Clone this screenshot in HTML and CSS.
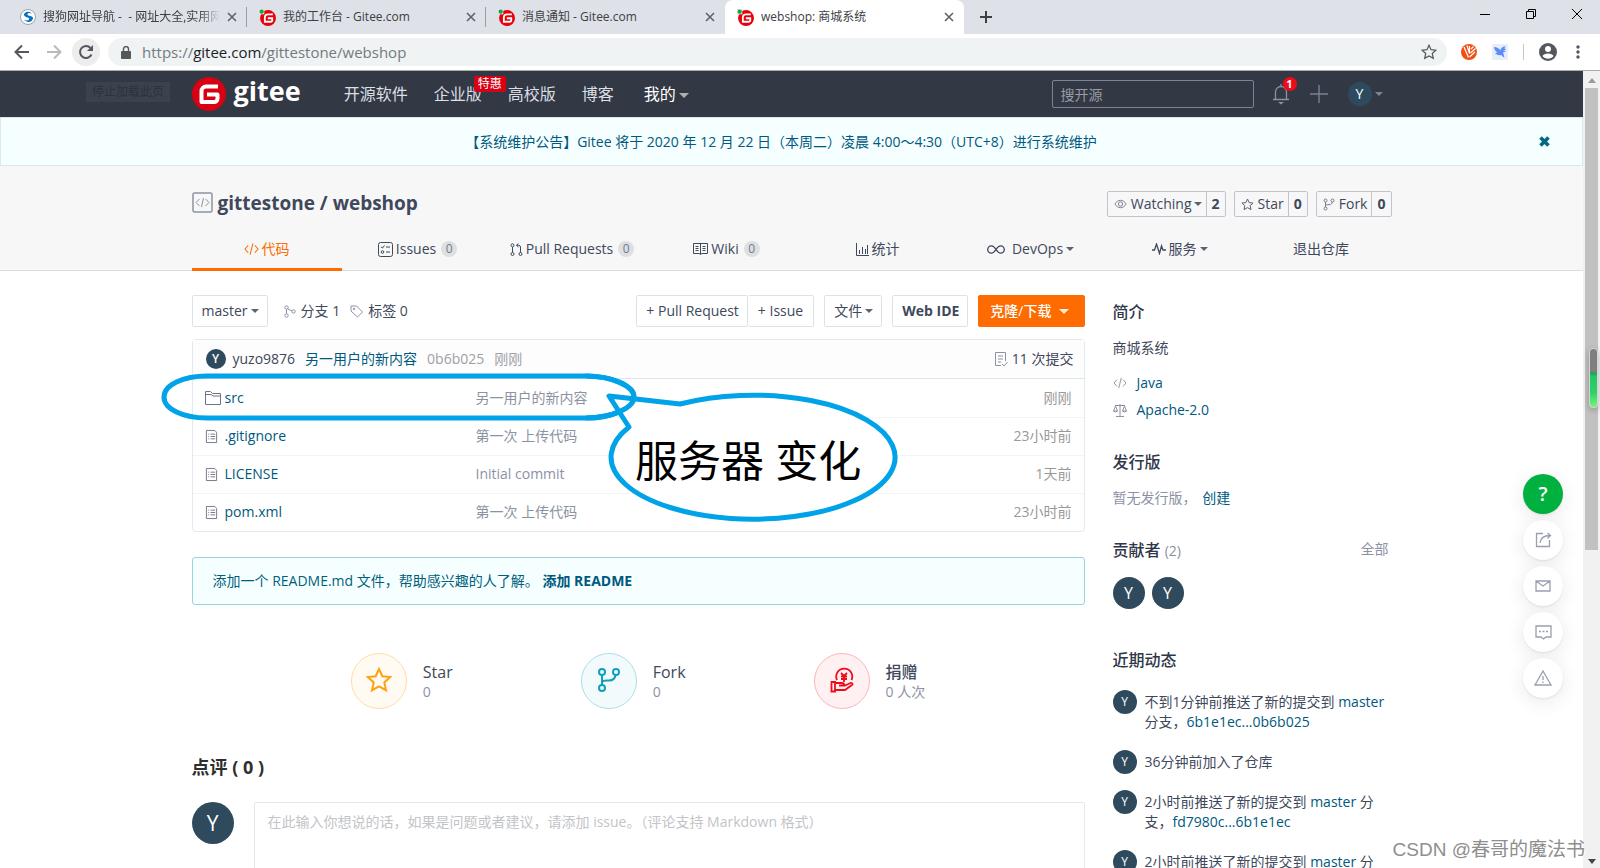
FILE: index.html
```html
<!DOCTYPE html>
<html lang="zh-CN">
<head>
<meta charset="utf-8">
<title>webshop: 商城系统</title>
<link rel="stylesheet" href="styles.css">
</head>
<body>
<svg class="defs" width="0" height="0" aria-hidden="true">
  <symbol id="favicon" viewBox="0 0 16 16"><circle cx="8.500" cy="8.500" r="7.500" fill="#e8000b"/><path d="M0 0h5v5H0z" fill="#dee1e6"/><circle cx="2.500" cy="2.500" r="2" fill="#0cae3c"/><path d="M13 5H8.500a3 3 0 0 0-3 3v4H11a1.500 1.500 0 0 0 1.500-1.500V8.700H8.300" fill="none" stroke="#fff" stroke-width="1.700"/></symbol>
  <symbol id="x" viewBox="0 0 10 10"><path d="M1 1l8 8M9 1L1 9" stroke="currentColor" stroke-width="1.600" fill="none"/></symbol>
  <symbol id="code" viewBox="0 0 16 14"><path d="M4.500 3L1 7l3.500 4M11.500 3L15 7l-3.500 4M9.500 1l-3 12" stroke="currentColor" stroke-width="1.100" fill="none"/></symbol>
  <symbol id="file" viewBox="0 0 14 16"><path d="M1.500 1.500h9l2 2v11h-11zM3.500 5.500h1M6 5.500h5M3.500 8h1M6 8h5M3.500 10.500h1M6 10.500h5" stroke="currentColor" fill="none"/></symbol>
  <symbol id="fork" viewBox="0 0 24 26"><g stroke="currentColor" fill="none" stroke-width="2"><circle cx="5" cy="5" r="3"/><circle cx="19" cy="5" r="3"/><circle cx="5" cy="21" r="3"/><path d="M5 8v10M5 15c1-2 4-1.500 7-1.500 4 0 6-2 6.500-5.500"/></g></symbol>
  <symbol id="star" viewBox="0 0 26 26"><path d="M13 2l3.300 7.200 7.900.900-5.900 5.300 1.700 7.800-7-3.900-7 3.900 1.700-7.800L1.800 10.100l7.900-.900z" fill="none" stroke="currentColor" stroke-width="2"/></symbol>
</svg>

<header class="browser">
  <div class="tabstrip">
    <div class="tab">
      <svg width="16" height="16" viewBox="0 0 16 16"><circle cx="8" cy="8" r="7.500" fill="#fff" stroke="#9aa3ab"/><path d="M12 4.500A5.200 5.200 0 0 0 4 5c-.5 4 6.500 2.500 5 5.500-1 1.500-3.500 1-5 0 2 3.500 8 3.500 9-1C13.500 6 7 7.500 7.500 5.200c.8-1.700 3-1.200 4.500-.7z" fill="#0b72bd"/></svg>
      <span class="tab-title fade">搜狗网址导航 -&nbsp; - 网址大全,实用网址</span>
      <button class="tab-close" aria-label="关闭"><svg width="10" height="10"><use href="#x"/></svg></button>
    </div>
    <div class="tab">
      <svg width="17" height="17"><use href="#favicon"/></svg>
      <span class="tab-title">我的工作台 - Gitee.com</span>
      <button class="tab-close" aria-label="关闭"><svg width="10" height="10"><use href="#x"/></svg></button>
    </div>
    <div class="tab last">
      <svg width="17" height="17"><use href="#favicon"/></svg>
      <span class="tab-title">消息通知 - Gitee.com</span>
      <button class="tab-close" aria-label="关闭"><svg width="10" height="10"><use href="#x"/></svg></button>
    </div>
    <div class="tab active">
      <svg width="17" height="17"><use href="#favicon"/></svg>
      <span class="tab-title">webshop: 商城系统</span>
      <button class="tab-close" aria-label="关闭"><svg width="10" height="10"><use href="#x"/></svg></button>
    </div>
    <button class="new-tab" aria-label="新标签页"><svg width="12" height="12" viewBox="0 0 12 12"><path d="M6 0v12M0 6h12" stroke="#3c4043" stroke-width="2"/></svg></button>
    <div class="window-controls">
      <button aria-label="最小化"><svg width="12" height="12" viewBox="0 0 12 12"><path d="M1 6.500h10" stroke="#000"/></svg></button>
      <button aria-label="还原"><svg width="12" height="12" viewBox="0 0 12 12"><path d="M1.500 3.500h7v7h-7zM3.500 3.500v-2h7v7h-2" stroke="#000" fill="none"/></svg></button>
      <button aria-label="关闭窗口"><svg width="12" height="12" viewBox="0 0 12 12"><path d="M1 1l10 10M11 1L1 11" stroke="#000"/></svg></button>
    </div>
  </div>
  <div class="toolbar">
    <button class="round" aria-label="后退"><svg width="16" height="16" viewBox="0 0 16 16"><path d="M15 8H2M8 1.500L1.500 8 8 14.500" stroke="#54585c" stroke-width="2" fill="none"/></svg></button>
    <button class="round" aria-label="前进"><svg width="16" height="16" viewBox="0 0 16 16"><path d="M1 8h13M8 1.500L14.500 8 8 14.500" stroke="#b8babd" stroke-width="2" fill="none"/></svg></button>
    <button class="round reload" aria-label="重新加载"><svg width="16" height="16" viewBox="0 0 16 16"><path d="M13.500 10.500A6 6 0 1 1 12.500 4" stroke="#54585c" stroke-width="2" fill="none"/><path d="M15 1v6H9z" fill="#54585c"/></svg></button>
    <div class="omnibox">
      <svg width="10" height="13" viewBox="0 0 10 13"><path d="M1 5h8a1 1 0 0 1 1 1v6a1 1 0 0 1-1 1H1a1 1 0 0 1-1-1V6a1 1 0 0 1 1-1z" fill="#54585c"/><path d="M2.500 5V3a2.500 2.500 0 0 1 5 0v2" stroke="#54585c" stroke-width="1.400" fill="none"/></svg>
      <span class="url">https://<b>gitee.com</b>/gittestone/webshop</span>
      <svg width="16" height="16" viewBox="0 0 26 26" color="#54585c"><use href="#star"/></svg>
    </div>
    <div class="extensions">
      <svg width="16" height="16" viewBox="0 0 16 16"><circle cx="8" cy="8" r="8" fill="#f04f14"/><path d="M3 3l4.500 10.500M6 1.500l2.500 8V2M8.500 13l5.500-5M9.500 9l5-4.500M10 5l2.500-2.500" stroke="#fff" stroke-width="1.200" fill="none"/></svg>
      <svg width="16" height="16" viewBox="0 0 16 16"><rect width="16" height="16" rx="1" fill="#e8edfb"/><path d="M2 3c3 0 5 1.500 6.500 3C9.500 3 11.500 2 14 2.500L12.500 4l1.500 2-3 .500 3 1-3 1 1.500 5C10.500 13 10 11.500 9 11c-2.500.500-5-.500-6-2l2.500-.500C3.500 7.500 2.300 5.500 2 3z" fill="#5a8df5"/></svg>
      <i class="divider"></i>
      <svg width="18" height="18" viewBox="0 0 18 18"><circle cx="9" cy="9" r="9" fill="#54585c"/><circle cx="9" cy="6" r="3" fill="#fff"/><path d="M3.500 13c1-3.500 10-3.500 11 0-2.500 3.500-8.500 3.500-11 0z" fill="#fff"/></svg>
      <svg class="menu" width="4" height="14" viewBox="0 0 4 14" fill="#54585c"><circle cx="2" cy="2" r="1.700"/><circle cx="2" cy="7" r="1.700"/><circle cx="2" cy="12" r="1.700"/></svg>
    </div>
  </div>
</header>

<div class="viewport">
<div class="page">
  <nav class="site-nav">
    <span class="ghost">停止加载此页</span>
    <div class="container nav-inner">
      <a class="logo" href="#"><svg width="34" height="34" viewBox="0 0 34 34"><circle cx="17" cy="17" r="17" fill="#d90013"/><path d="M26 9.500H14a4.500 4.500 0 0 0-4.500 4.500v11H22a3.500 3.500 0 0 0 3.500-3.500v-4H15" fill="none" stroke="#fff" stroke-width="4" stroke-linejoin="round"/></svg><span>gitee</span></a>
      <a class="nav-link" href="#">开源软件</a>
      <a class="nav-link" href="#">企业版<em class="promo">特惠</em></a>
      <a class="nav-link" href="#">高校版</a>
      <a class="nav-link" href="#">博客</a>
      <a class="nav-link mine" href="#">我的<i class="caret"></i></a>
      <input class="search" type="text" placeholder="搜开源" aria-label="搜开源">
      <button class="bell" aria-label="通知"><svg width="18" height="22" viewBox="0 0 18 22"><path d="M1 16.500h16M3.500 16V9a5.500 5.500 0 0 1 11 0v7M9 3.500V1" stroke="#8c92a4" stroke-width="1.300" fill="none"/><path d="M6 19h6l-3 2.500z" fill="#8c92a4"/></svg><em>1</em></button>
      <button class="plus" aria-label="新建"><svg width="18" height="18" viewBox="0 0 18 18"><path d="M9 0v18M0 9h18" stroke="#7c8295" stroke-width="1.400"/></svg></button>
      <button class="user"><span class="avatar a24 head">Y</span><i class="caret"></i></button>
    </div>
  </nav>

  <div class="notice">
    <a href="#">【系统维护公告】Gitee 将于 2020 年 12 月 22 日（本周二）凌晨 4:00～4:30（UTC+8）进行系统维护</a>
    <button class="notice-close" aria-label="关闭公告"><svg width="11" height="11" viewBox="0 0 11 11"><path d="M1.500 1.500l8 8M9.500 1.500l-8 8" stroke="#006a85" stroke-width="3.600"/></svg></button>
  </div>

  <div class="repo-head">
    <div class="container">
      <div class="repo-title">
        <svg width="21" height="21" viewBox="0 0 21 21" fill="none" stroke="#8c92a4"><rect x="1" y="1" width="19" height="19" rx="1.500" stroke-width="1.500"/><path d="M7.500 7L4 10.500 7.500 14M13.500 7l3.500 3.500-3.500 3.500M11.500 6l-2 9"/></svg>
        <h1><a href="#">gittestone</a> / <a href="#">webshop</a></h1>
        <div class="counter"><button><svg width="13" height="10" viewBox="0 0 14 10" fill="none" stroke="#777d90"><path d="M1 5c3-5.300 9-5.300 12 0-3 5.300-9 5.300-12 0z"/><circle cx="7" cy="5" r="2.300"/></svg>Watching<i class="caret"></i></button><a href="#">2</a></div>
        <div class="counter"><button><svg width="13" height="13" color="#5c6277"><use href="#star"/></svg>Star</button><a href="#">0</a></div>
        <div class="counter"><button><svg width="12" height="13" color="#777d90"><use href="#fork"/></svg>Fork</button><a href="#">0</a></div>
      </div>
      <nav class="repo-tabs">
        <a class="on" href="#"><svg width="15" height="14"><use href="#code"/></svg>代码</a>
        <a href="#"><svg width="15" height="15" viewBox="0 0 15 15" fill="none" stroke="currentColor"><rect x=".5" y=".5" width="14" height="14" rx="2"/><path d="M3 5l1.500 1L6.500 3.500M8 5h4M8 10h4"/><circle cx="4.500" cy="10" r="1.300"/></svg>Issues<em>0</em></a>
        <a href="#"><svg width="13" height="13" viewBox="0 0 13 13" fill="none" stroke="currentColor"><circle cx="2.500" cy="2.300" r="1.500"/><circle cx="2.500" cy="11" r="1.500"/><circle cx="10.500" cy="11" r="1.500"/><path d="M2.500 4v5.500M10.500 9.500V4q0-1.700-2-1.700H6.500M8.500.5L6.500 2.300l2 1.800"/></svg>Pull Requests<em>0</em></a>
        <a href="#"><svg width="15" height="12" viewBox="0 0 15 12" fill="none" stroke="currentColor"><path d="M.5.5h14v10H9l-1.500 1L6 10.500H.5zM7.500 1v10M2.500 3.500h3M2.500 5.500h3M2.500 7.500h3M9.500 3.500h3M9.500 5.500h3M9.500 7.500h3"/></svg>Wiki<em>0</em></a>
        <a href="#"><svg width="13" height="13" viewBox="0 0 13 13" fill="none" stroke="currentColor"><path d="M.5 0v12.500H13M3.500 11V7M6.500 11V4M9.500 11V6M11.500 11V2"/></svg>统计</a>
        <a href="#"><svg class="wide" width="18" height="9" viewBox="0 0 20 10" fill="none" stroke="currentColor" stroke-width="1.500"><path d="M10 5C7 .5 5.500 1 4.800 1a4 4 0 0 0 0 8C6.500 9 8 8 10 5s3.500-4 5.200-4a4 4 0 0 1 0 8C13.500 9 12 8 10 5z"/></svg>DevOps<i class="caret"></i></a>
        <a href="#"><svg width="14" height="12" viewBox="0 0 14 12" fill="none" stroke="currentColor" stroke-width="1.300"><path d="M0 7h2.500l2-6 3 9.500 2-7.500 1.500 4h3"/></svg>服务<i class="caret"></i></a>
        <a href="#">退出仓库</a>
      </nav>
    </div>
  </div>

  <div class="container columns">
    <main>
      <div class="actions">
        <button class="btn">master<i class="caret"></i></button>
        <a class="ref first" href="#"><svg width="12" height="13" viewBox="0 0 12 13" fill="none" stroke="#8c92a4"><circle cx="2.500" cy="2.500" r="1.700"/><circle cx="2.500" cy="10.500" r="1.700"/><circle cx="9.500" cy="6.500" r="1.700"/><path d="M2.500 4.200v4.600M4 4l4 2"/></svg>分支 1</a>
        <a class="ref" href="#"><svg width="13" height="13" viewBox="0 0 13 13" fill="none" stroke="#8c92a4"><path d="M1 1h5.500l6 6-5 5-6.500-6z"/><circle cx="4" cy="4" r=".8"/></svg>标签 0</a>
        <div class="group"><button class="btn">+ Pull Request</button><button class="btn issue">+ Issue</button></div>
        <button class="btn">文件<i class="caret"></i></button>
        <button class="btn strong">Web IDE</button>
        <button class="btn clone">克隆/下载<i class="caret"></i></button>
      </div>

      <section class="files">
        <div class="last-commit">
          <span class="avatar a20">Y</span>
          <a class="author" href="#">yuzo9876</a>
          <a class="message" href="#">另一用户的新内容</a>
          <span>0b6b025</span><span>刚刚</span>
          <a class="commits" href="#"><svg width="14" height="15" viewBox="0 0 14 15" fill="none" stroke="#8c92a4"><path d="M11.500 9V.5H1.500v13H7M4 4h5M4 7h5M4 10h3M8 12l2 2 3.500-4"/></svg>11 次提交</a>
        </div>
        <table>
          <tr><td><a href="#"><svg width="16" height="14" viewBox="0 0 16 14" fill="none" stroke="currentColor"><path d="M.5 13.500V.5h5l2 2h8v11zM.5 3.500h5.500l2 1.500h7"/></svg>src</a></td><td>另一用户的新内容</td><td>刚刚</td></tr>
          <tr><td><a href="#"><svg width="13" height="15"><use href="#file"/></svg>.gitignore</a></td><td>第一次 上传代码</td><td>23小时前</td></tr>
          <tr><td><a href="#"><svg width="13" height="15"><use href="#file"/></svg>LICENSE</a></td><td>Initial commit</td><td>1天前</td></tr>
          <tr><td><a href="#"><svg width="13" height="15"><use href="#file"/></svg>pom.xml</a></td><td>第一次 上传代码</td><td>23小时前</td></tr>
        </table>
        <svg class="markup" width="760" height="170" viewBox="0 0 760 170" fill="none" stroke="#00a2e8" stroke-width="5" stroke-linejoin="round">
          <path d="M55 10H434C460 10 482 20 482 31S460 52 434 52H55C31 52 12 43 12 31S31 10 55 10z"/>
          <path d="M457 30L528 38A142 62 0 1 1 477 61z" fill="#fff"/>
          <path d="M434 10C460 10 482 20 482 31S460 52 434 52"/>
          <text x="483" y="111">服务器 变化</text>
        </svg>
      </section>

      <div class="readme">添加一个 README.md 文件，帮助感兴趣的人了解。 <a href="#">添加 README</a></div>

      <div class="stats">
        <div class="stat"><button class="disc gold" aria-label="Star"><svg width="26" height="26"><use href="#star"/></svg></button><div><b>Star</b><span>0</span></div></div>
        <div class="stat"><button class="disc teal" aria-label="Fork"><svg width="24" height="26"><use href="#fork"/></svg></button><div><b>Fork</b><span>0</span></div></div>
        <div class="stat"><button class="disc red" aria-label="捐赠"><svg width="24" height="26" viewBox="0 0 24 26" fill="none" stroke="currentColor" stroke-width="1.800"><path d="M7 13a8 8 0 1 1 14.500 0M11 6l3 3 3-3M14 9v6M11 9.500h6M11 12h6M1.500 15h3.500v9.500H1.500zM5 16h7q2 0 2.500 2.500H9M14 19l6.500-3q2-.500 2 1.500L15 23H5"/></svg></button><div><b>捐赠</b><span>0 人次</span></div></div>
      </div>

      <h2>点评 ( 0 )</h2>
      <div class="comment">
        <span class="avatar a42">Y</span>
        <textarea aria-label="评论" placeholder="在此输入你想说的话，如果是问题或者建议，请添加 issue。（评论支持 Markdown 格式）"></textarea>
      </div>
    </main>

    <aside>
      <h3>简介</h3>
      <p class="desc">商城系统</p>
      <p class="meta"><svg width="14" height="12" color="#8c92a4"><use href="#code"/></svg><a href="#">Java</a></p>
      <p class="meta"><svg width="14" height="13" viewBox="0 0 14 13" fill="none" stroke="#8c92a4"><path d="M7 0v12M3 12.500h8M2 1.500h10M2.500 2L.5 7M2.500 2l2 5M11.500 2l-2 5M11.500 2l2 5M.5 7q2 2 4 0zM9.500 7q2 2 4 0z"/></svg><a href="#">Apache-2.0</a></p>
      <h3 class="spaced">发行版</h3>
      <p class="release">暂无发行版， <a href="#">创建</a></p>
      <div class="contrib-head"><h3>贡献者 <small>(2)</small></h3><a href="#">全部</a></div>
      <div class="contributors"><span class="avatar a32">Y</span><span class="avatar a32">Y</span></div>
      <h3>近期动态</h3>
      <ul class="feed">
        <li><span class="avatar a24">Y</span><p>不到1分钟前推送了新的提交到 <a href="#">master</a> 分支，<a href="#">6b1e1ec...0b6b025</a></p></li>
        <li><span class="avatar a24">Y</span><p>36分钟前加入了仓库</p></li>
        <li><span class="avatar a24">Y</span><p>2小时前推送了新的提交到 <a href="#">master</a> 分支，<a href="#">fd7980c...6b1e1ec</a></p></li>
        <li><span class="avatar a24">Y</span><p>2小时前推送了新的提交到 <a href="#">master</a> 分支</p></li>
      </ul>
    </aside>
  </div>

  <div class="float-bar">
    <button class="help">?</button>
    <button aria-label="分享"><svg width="17" height="16" viewBox="0 0 17 16" fill="none" stroke="currentColor" stroke-width="1.300"><path d="M8 1.500H1.500v13h13V8M5 11c.5-5 4-7.500 10-7.500M12.500 1L15.500 3.500l-3 3"/></svg></button>
    <button aria-label="私信"><svg width="16" height="12" viewBox="0 0 16 12" fill="none" stroke="currentColor" stroke-width="1.300"><path d="M1 1h14v10H1zM1 1l7 5 7-5"/></svg></button>
    <button aria-label="反馈"><svg width="17" height="15" viewBox="0 0 17 15" fill="none" stroke="currentColor" stroke-width="1.300"><path d="M1 1h15v11h-5l-2.500 2L6 12H1zM4 6.500h2M7.500 6.500h2M11 6.500h2"/></svg></button>
    <button aria-label="举报"><svg width="18" height="16" viewBox="0 0 18 16" fill="none" stroke="currentColor" stroke-width="1.300"><path d="M9 1l8 14H1zM9 6v4M9 11.500v1.500"/></svg></button>
  </div>
</div>
<div class="scrollbar"><i class="up"></i><i class="thumb"></i><i class="down"></i></div>
</div>
<i class="meter"></i>
<div class="watermark">CSDN @春哥的魔法书</div>
</body>
</html>
```
FILE: styles.css
```css
* { box-sizing: border-box; }
body {
  margin: 0;
  height: 100vh;
  display: flex;
  flex-direction: column;
  overflow: hidden;
  position: relative;
  font: 14px/20px "Open Sans", "Noto Sans CJK SC", sans-serif;
  color: #40485b;
  background: #fff;
}
a { color: #005980; text-decoration: none; }
button { font: inherit; color: inherit; background: none; border: 0; padding: 0; }
h1, h2, h3, p, ul { margin: 0; padding: 0; }
em, i { font-style: normal; }
svg { flex: none; }
.defs { position: absolute; }
.caret {
  display: inline-block;
  flex: none;
  border: 4px solid transparent;
  border-top-color: currentColor;
  border-bottom: 0;
  opacity: .85;
  margin-left: 3px;
}
.container { width: 1200px; max-width: 100%; margin: 0 auto; }
.avatar {
  flex: none;
  display: flex;
  align-items: center;
  justify-content: center;
  border-radius: 50%;
  background: #2f4a5c;
  color: #fff;
}
.a20 { width: 20px; height: 20px; font-size: 12px; font-weight: 600; }
.a24 { width: 24px; height: 24px; font-size: 12px; }
.a32 { width: 32px; height: 32px; font-size: 16px; }
.a42 { width: 42px; height: 42px; font-size: 21px; }

/* Browser frame */
.browser { flex: none; border-bottom: 1px solid #a9abae; }
.tabstrip { display: flex; height: 34px; background: #dee1e8; padding-left: 8px; }
.tab {
  width: 239px;
  display: flex;
  align-items: center;
  padding: 0 10px 0 12px;
  gap: 7px;
  font-size: 12px;
  color: #3c4043;
  background: linear-gradient(#9a9da2, #9a9da2) right center / 1px 20px no-repeat;
}
.tab.last { background: none; }
.tab.active { background: #fff; border-radius: 8px 8px 0 0; }
.tab-title { flex: 1; white-space: nowrap; overflow: hidden; }
.fade { -webkit-mask: linear-gradient(90deg, #000 88%, transparent); mask: linear-gradient(90deg, #000 88%, transparent); }
.tab-close { display: flex; color: #5f6368; }
.new-tab { display: flex; align-items: center; padding-left: 16px; }
.window-controls { display: flex; margin-left: auto; padding-bottom: 6px; }
.window-controls button { width: 46px; display: flex; justify-content: center; align-items: center; }
.toolbar { display: flex; align-items: center; height: 36px; padding: 0 20px 0 8px; background: #fff; }
.round { width: 28px; height: 28px; margin-right: 4px; border-radius: 50%; display: flex; align-items: center; justify-content: center; }
.reload { background: #ededee; margin-right: 8px; }
.omnibox {
  flex: 1;
  display: flex;
  align-items: center;
  gap: 11px;
  height: 28px;
  border-radius: 14px;
  padding: 0 10px 0 13px;
  background: #eff3f4;
  font-size: 15px;
  color: #757a7f;
}
.omnibox b { font-weight: 400; color: #1f2225; }
.url { flex: 1; }
.extensions { display: flex; align-items: center; gap: 15px; padding-left: 14px; }
.extensions .menu { margin-left: 4px; }
.divider { width: 1px; height: 16px; background: #c4c7ca; }

/* Viewport and scrollbar */
.viewport { flex: 1; min-height: 0; display: flex; }
.page { flex: 1; min-width: 0; overflow: hidden; position: relative; }
.scrollbar { flex: none; width: 17px; background: #f1f1f1; display: flex; flex-direction: column; align-items: center; }
.up { margin: 7px 0 5px; border: 4px solid transparent; border-top: 0; border-bottom: 5px solid #9a9a9a; }
.thumb { width: 13px; flex: 0 0 58%; background: #c1c1c1; }
.down { margin: auto 0 4px; border: 4px solid transparent; border-bottom: 0; border-top: 5px solid #444; }
.meter {
  position: absolute;
  right: 2px;
  top: 348px;
  width: 9px;
  height: 60px;
  border-radius: 4px;
  border: 1px solid #d4d4d4;
  background: linear-gradient(#7f7f7f 40%, #15a550 41%, #24c965 48%, #2fd068 75%, #78f57c);
  box-shadow: 0 2px 6px rgba(0, 0, 0, .25);
}
.watermark {
  position: absolute;
  right: 15px;
  bottom: 4px;
  font: 19px/28px "Liberation Sans", "Noto Sans CJK SC", sans-serif;
  color: #8e8e8e;
  text-shadow: 1px 1px 0 #fff;
}

/* Site navigation */
.site-nav { background: #323844; position: relative; }
.ghost { position: absolute; left: 86px; top: 11px; padding: 0 6px; background: #3c424c; color: #2b323d; font-size: 12px; }
.nav-inner { display: flex; align-items: center; height: 46px; }
.logo { display: flex; align-items: center; gap: 8px; margin-right: 43px; color: #fff; font-size: 27px; font-weight: 700; line-height: 36px; }
.logo span { padding-bottom: 7px; }
.nav-link { position: relative; margin-right: 26px; color: #dcdfe4; font-size: 16px; line-height: 24px; white-space: nowrap; }
.nav-link.mine { color: #fff; margin-left: 4px; }
.nav-link .caret { vertical-align: middle; opacity: .6; border-width: 5px; border-bottom: 0; }
.promo { position: absolute; left: 40px; top: -6px; background: #d90013; color: #fff; font-size: 12px; line-height: 16px; padding: 0 4px; border-radius: 2px; }
.search {
  width: 202px;
  height: 28px;
  margin-left: auto;
  padding: 0 8px;
  border: 1px solid #7d8497;
  border-radius: 2px;
  background: transparent;
  color: #fff;
  font: inherit;
}
.search::placeholder { color: #989ba3; opacity: 1; }
.bell { position: relative; display: flex; margin-left: 18px; }
.bell em { position: absolute; left: 11px; top: -6px; width: 14px; height: 14px; border-radius: 50%; background: #f10a1a; color: #fff; font-size: 11px; line-height: 14px; font-weight: 700; }
.plus { display: flex; margin-left: 20px; }
.user { display: flex; align-items: center; margin: 0 9px 0 20px; color: #8c92a4; }
.head { background: #2e4a5e; font-size: 14px; }

.notice { display: flex; align-items: center; height: 49px; padding: 0 32px 0 22px; border: 1px solid #dbe9ee; background: #f6ffff; }
.notice a { flex: 1; text-align: center; }
.notice-close { display: flex; }

/* Repository header */
.repo-head { background: #f7f7f7; border-bottom: 1px solid #dcdddf; padding-top: 25px; }
.repo-title { display: flex; align-items: center; height: 26px; gap: 8px; }
.repo-title > svg { margin: 0 -3px 4px 0; }
.repo-title h1 { font-size: 19px; line-height: 26px; margin-right: auto; padding-bottom: 2px; }
.repo-title h1 a { color: inherit; }
.counter { display: flex; height: 26px; border: 1px solid #bfc4cf; border-radius: 2px; }
.counter button { display: flex; align-items: center; gap: 4px; padding: 0 4px 0 6px; }
.counter .caret { margin-left: -2px; }
.counter a { display: flex; align-items: center; padding: 0 5px; border-left: 1px solid #bfc4cf; color: inherit; font-weight: 700; }
.repo-tabs { display: grid; grid-template-columns: 150fr 152fr 157fr 152fr 150fr 156fr 142fr 141fr; margin-top: 10px; }
.repo-tabs a { display: flex; align-items: center; justify-content: center; gap: 3px; height: 44px; padding-top: 3px; color: inherit; border-bottom: 3px solid transparent; margin-bottom: -1px; }
.repo-tabs a.on { color: #fe6b00; border-color: #fe6b00; }
.repo-tabs .caret { margin-left: 0; }
.repo-tabs .wide { margin-right: 4px; }
.repo-tabs em { min-width: 16px; height: 16px; margin-left: 2px; border-radius: 8px; background: #dddfe1; color: #717a92; font-size: 12px; line-height: 16px; text-align: center; }

/* Main column */
.columns { display: grid; grid-template-columns: minmax(0, 1fr) 279px; gap: 28px; padding-top: 24px; }
.actions { display: flex; gap: 10px; height: 32px; align-items: stretch; }
.btn { display: flex; align-items: center; padding: 0 8px 0 9px; border: 1px solid #dce3e8; border-radius: 2px; background: #fff; white-space: nowrap; }
.ref { display: flex; align-items: center; gap: 5px; color: inherit; }
.ref.first { margin-left: 6px; }
.group { display: flex; margin-left: auto; }
.group .btn + .btn { border-left: 0; }
.group .issue { padding: 0 10px; }
.strong { font-weight: 700; }
.clone { background: #fe6b00; border-color: #fe6b00; color: #fff; font-weight: 500; padding: 0 15px 0 11px; }
.clone .caret { margin-left: 7px; border-width: 5px; border-bottom: 0; }
.files { position: relative; margin-top: 12px; border: 1px solid #e1eaee; border-radius: 4px; }
.last-commit { display: flex; align-items: center; gap: 10px; height: 39px; padding: 0 10px 0 13px; background: #fdfdfd; border-bottom: 1px solid #dce6ec; color: #9d9fa6; }
.last-commit .avatar { margin-right: -3px; }
.author { color: #40485b; }
.commits { display: flex; align-items: center; gap: 4px; margin-left: auto; color: #40485b; }
table { width: 100%; border-collapse: collapse; table-layout: fixed; }
td { height: 38px; padding: 0; color: #8c92a4; border-top: 1px solid #f2f4f6; }
tr:first-child td { border-top: 0; }
td:first-child { width: 283px; padding-left: 12px; }
td:last-child { width: 200px; padding-right: 12px; text-align: right; color: #999; }
td a { display: flex; align-items: center; }
td svg { color: #6e7387; margin-right: 4px; }
td svg:not([width="16"]) { margin-right: 7px; }
.markup { position: absolute; left: -41px; top: 26px; pointer-events: none; }
.markup text { font-size: 43px; font-weight: 400; fill: #000; stroke: none; }
.readme { margin: 25px 0 48px; padding: 13px 20px; border: 1px solid #96d5de; border-radius: 3px; background: #f6ffff; color: #005f7c; }
.readme a { font-weight: 700; }
.stats { display: flex; justify-content: center; gap: 128px; }
.stat { display: flex; align-items: center; gap: 16px; }
.stat div { display: flex; flex-direction: column; padding-top: 2px; }
.stat b { font-weight: 500; font-size: 16px; }
.stat span { color: #8c92a4; }
.disc { width: 56px; height: 56px; display: flex; align-items: center; justify-content: center; border: 1px solid; border-radius: 50%; padding-bottom: 3px; }
.gold { color: #ffa012; border-color: #ffdca8; background: #fffaf2; }
.teal { color: #109fbd; border-color: #aadfe8; background: #f2fafc; }
.red { color: #f10a1a; border-color: #fcb4ba; background: #fff1f2; }
h2 { margin-top: 44px; font-size: 18px; line-height: 28px; color: #2e2e2e; }
.comment { display: flex; gap: 20px; margin-top: 21px; }
textarea { flex: 1; height: 120px; padding: 9px 13px; border: 1px solid #e7e8e9; border-radius: 2px; resize: none; font: inherit; }
textarea::placeholder { color: #c2c4c8; opacity: 1; }

/* Sidebar */
h3 { font-size: 16px; line-height: 24px; font-weight: 500; color: #2f3648; }
aside { padding-top: 5px; }
.desc { margin: 14px 0 15px; }
.meta { display: flex; align-items: center; gap: 10px; margin-bottom: 7px; }
.spaced { margin-top: 30px; }
.release { margin-top: 14px; color: #8c92a4; }
.release a { margin-left: 2px; }
.contrib-head { display: flex; justify-content: space-between; margin: 30px 3px 14px 0; }
.contrib-head a { color: #8c92a4; padding-top: 1px; }
small { font-size: 14px; font-weight: 400; color: #8c92a4; }
.contributors { display: flex; gap: 7px; margin-bottom: 39px; }
.feed { list-style: none; margin-top: 18px; }
.feed li { display: flex; align-items: flex-start; gap: 8px; margin-bottom: 20px; width: 274px; }
.feed .avatar { margin-bottom: -4px; }
.feed p { padding-top: 2px; margin-bottom: -2px; }

/* Floating buttons */
.float-bar { position: absolute; right: 20px; top: 403px; display: flex; flex-direction: column; gap: 6px; color: #9a9fb0; }
.float-bar button { width: 40px; height: 40px; border-radius: 50%; background: #fff; display: flex; align-items: center; justify-content: center; box-shadow: 0 4px 20px rgba(0, 0, 0, .09), 0 1px 2px rgba(0, 0, 0, .08); }
.float-bar .help { background: #00b140; color: #fff; font-size: 20px; font-weight: 600; }
```
